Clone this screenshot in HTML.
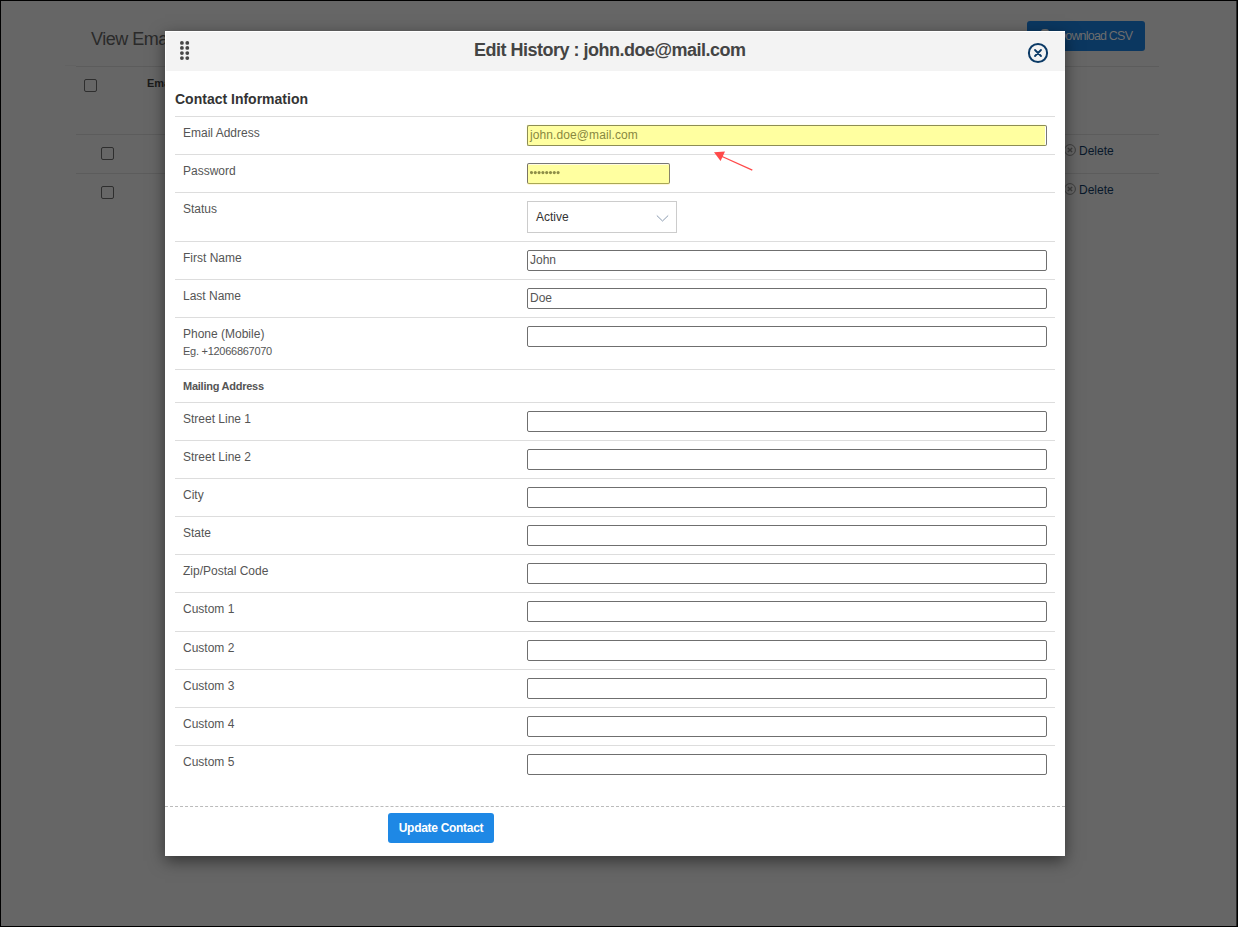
<!DOCTYPE html>
<html><head><meta charset="utf-8">
<style>
*{margin:0;padding:0;box-sizing:border-box}
html,body{width:1238px;height:927px;overflow:hidden}
body{position:relative;background:#666;font-family:"Liberation Sans",sans-serif;border:1px solid #000}
.a{position:absolute;white-space:nowrap}
.ptitle{left:90px;top:27px;font-size:18px;color:#2a2a2a;line-height:22px;letter-spacing:-0.5px}
.hline{position:absolute;height:1px;background:#5c5c5c}
.cb{position:absolute;width:13px;height:13px;border:1px solid #2e2e2e;border-radius:2px}
.pbtn{left:1026px;top:20px;width:118px;height:30px;background:#0b3760;border-radius:3px}
.pbtnt{left:1056px;top:27px;font-size:12.5px;color:#6e6e6e;line-height:16px;letter-spacing:-0.8px}
.del{font-size:12px;color:#08182a;line-height:16px}
.delic{position:absolute;width:11px;height:11px;border:1px solid #3a3a3a;border-radius:50%}
.modal{position:absolute;left:164px;top:30px;width:900px;height:825px;background:#fff;box-shadow:0 5px 15px rgba(0,0,0,.5)}
.mhead{position:absolute;left:1px;top:1px;width:899px;height:39px;background:#f3f3f3}
.title{left:309px;top:8px;font-size:18px;font-weight:bold;color:#444;line-height:22px;letter-spacing:-0.5px}
.sec{left:10px;top:60px;font-size:14px;font-weight:bold;color:#333;line-height:16px}
.row{position:absolute;left:10px;width:880px;height:1px;background:#ddd}
.lab{position:absolute;left:18px;font-size:12px;color:#555;line-height:16px;white-space:nowrap}
.hd{font-weight:bold;font-size:11px;letter-spacing:-0.25px}
.eg{font-size:11px;letter-spacing:-0.27px}
.inp{position:absolute;left:362px;width:520px;height:21px;border:1px solid #6f6f6f;border-radius:2px;background:#fff;font-size:12px;color:#555;line-height:19px;padding-left:2px;white-space:nowrap}
.yel{background:#ffffa0;border-color:#8d8d55;color:#888840;letter-spacing:0.1px}
.em{border-right-color:#777;box-shadow:inset -1px 0 0 #fff,-1px -1px 0 #fffff0}
.pw{border-color:#777 #86826a #a9a855 #7a7465;box-shadow:inset 0 1px 0 #fffbe0,0 1px 0 #fff6d8}
.sel{position:absolute;left:362px;width:150px;height:32px;border:1px solid #ccc;background:#fff}
.st{position:absolute;left:8px;top:7px;font-size:12px;color:#333;line-height:16px}
.chev{position:absolute;left:128px;top:12px}
.btn{position:absolute;left:223px;top:782px;width:106px;height:30px;background:#1e88e5;border-radius:3px;color:#fff;font-size:12px;font-weight:bold;line-height:30px;text-align:center;letter-spacing:-0.3px}
.dash{position:absolute;left:0;top:775px;width:900px;height:1px;border-top:1px dashed #bbb}
.grip{position:absolute;left:15px;top:10px}
.close{position:absolute;left:861px;top:10px}

</style></head><body>
<div class="a ptitle">View Email List</div>
<div class="a" style="left:1235px;top:0;width:1px;height:925px;background:#2a2a2a"></div>
<div class="hline" style="left:64px;top:64px;width:11px;background:#626262"></div>
<div class="hline" style="left:75px;top:65px;width:1083px"></div>
<div class="cb" style="left:83px;top:78px"></div>
<div class="a" style="left:146px;top:75px;font-size:11px;font-weight:bold;color:#1a1a1a;line-height:14px">Email</div>
<div class="hline" style="left:75px;top:133px;width:1083px"></div>
<div class="cb" style="left:100px;top:146px"></div>
<div class="hline" style="left:75px;top:172px;width:1083px"></div>
<div class="cb" style="left:100px;top:185px"></div>
<div class="a pbtn"></div>
<div class="a pbtnt">Download CSV</div>
<div class="a" style="left:1040px;top:28px;width:8px;height:6px;background:#6c6c6c;border-radius:3px 3px 0 0"></div>
<svg class="a" style="left:1062px;top:142px" width="14" height="14" viewBox="0 0 14 14"><circle cx="7" cy="7" r="5.4" fill="none" stroke="#3e3e3e" stroke-width="1"/><path d="M4.9 4.9 L9.1 9.1 M9.1 4.9 L4.9 9.1" stroke="#3e3e3e" stroke-width="1.4"/></svg>
<div class="a del" style="left:1078px;top:142px">Delete</div>
<svg class="a" style="left:1062px;top:181px" width="14" height="14" viewBox="0 0 14 14"><circle cx="7" cy="7" r="5.4" fill="none" stroke="#3e3e3e" stroke-width="1"/><path d="M4.9 4.9 L9.1 9.1 M9.1 4.9 L4.9 9.1" stroke="#3e3e3e" stroke-width="1.4"/></svg>
<div class="a del" style="left:1078px;top:181px">Delete</div>

<div class="modal">
  <div class="mhead"></div>
  <svg class="grip" width="12" height="20" viewBox="0 0 12 20"><g fill="#464646"><circle cx="1.9" cy="1.9" r="1.9"/><circle cx="7.3" cy="1.9" r="1.9"/><circle cx="1.9" cy="6.9" r="1.9"/><circle cx="7.3" cy="6.9" r="1.9"/><circle cx="1.9" cy="12.1" r="1.9"/><circle cx="7.3" cy="12.1" r="1.9"/><circle cx="1.9" cy="17.1" r="1.9"/><circle cx="7.3" cy="17.1" r="1.9"/></g></svg>
  <div class="a title">Edit History : john.doe@mail.com</div>
  <svg class="close" width="24" height="24" viewBox="0 0 24 24"><circle cx="12" cy="12" r="9.1" fill="none" stroke="#0b3a66" stroke-width="2"/><path d="M9 9 L15 15 M15 9 L9 15" stroke="#0b3a66" stroke-width="1.8" stroke-linecap="round"/></svg>
  <div class="a sec">Contact Information</div>
<div class="row" style="top:85px"></div>
<div class="lab" style="top:94px">Email Address</div>
<div class="inp yel em" style="top:94px"><span class="it">john.doe@mail.com</span></div>
<div class="row" style="top:123px"></div>
<div class="lab" style="top:132px">Password</div>
<div class="inp yel pw" style="top:132px;width:143px"><svg style="position:absolute;left:2px;top:6.5px" width="32" height="5"><circle cx="1.50" cy="1.6" r="1.55" fill="#8e8e48"/><circle cx="5.30" cy="1.6" r="1.55" fill="#8e8e48"/><circle cx="9.10" cy="1.6" r="1.55" fill="#8e8e48"/><circle cx="12.90" cy="1.6" r="1.55" fill="#8e8e48"/><circle cx="16.70" cy="1.6" r="1.55" fill="#8e8e48"/><circle cx="20.50" cy="1.6" r="1.55" fill="#8e8e48"/><circle cx="24.30" cy="1.6" r="1.55" fill="#8e8e48"/><circle cx="28.10" cy="1.6" r="1.55" fill="#8e8e48"/></svg></div>
<div class="row" style="top:161px"></div>
<div class="lab" style="top:170px">Status</div>
<div class="sel" style="top:170px"><span class="st">Active</span><svg class="chev" width="14" height="9" viewBox="0 0 14 9"><path d="M0.8 1.5 L6.5 7 L12.2 1.5" fill="none" stroke="#8b9bb0" stroke-width="1"/></svg></div>
<div class="row" style="top:210px"></div>
<div class="lab" style="top:219px">First Name</div>
<div class="inp" style="top:219px"><span class="it">John</span></div>
<div class="row" style="top:248px"></div>
<div class="lab" style="top:257px">Last Name</div>
<div class="inp" style="top:257px"><span class="it">Doe</span></div>
<div class="row" style="top:286px"></div>
<div class="lab" style="top:295px">Phone (Mobile)</div>
<div class="lab eg" style="top:312px">Eg. +12066867070</div>
<div class="inp" style="top:295px"><span class="it"></span></div>
<div class="row" style="top:338px"></div>
<div class="lab hd" style="top:347px">Mailing Address</div>
<div class="row" style="top:371px"></div>
<div class="lab" style="top:380px">Street Line 1</div>
<div class="inp" style="top:380px"><span class="it"></span></div>
<div class="row" style="top:409px"></div>
<div class="lab" style="top:418px">Street Line 2</div>
<div class="inp" style="top:418px"><span class="it"></span></div>
<div class="row" style="top:447px"></div>
<div class="lab" style="top:456px">City</div>
<div class="inp" style="top:456px"><span class="it"></span></div>
<div class="row" style="top:485px"></div>
<div class="lab" style="top:494px">State</div>
<div class="inp" style="top:494px"><span class="it"></span></div>
<div class="row" style="top:523px"></div>
<div class="lab" style="top:532px">Zip/Postal Code</div>
<div class="inp" style="top:532px"><span class="it"></span></div>
<div class="row" style="top:561px"></div>
<div class="lab" style="top:570px">Custom 1</div>
<div class="inp" style="top:570px"><span class="it"></span></div>
<div class="row" style="top:600px"></div>
<div class="lab" style="top:609px">Custom 2</div>
<div class="inp" style="top:609px"><span class="it"></span></div>
<div class="row" style="top:638px"></div>
<div class="lab" style="top:647px">Custom 3</div>
<div class="inp" style="top:647px"><span class="it"></span></div>
<div class="row" style="top:676px"></div>
<div class="lab" style="top:685px">Custom 4</div>
<div class="inp" style="top:685px"><span class="it"></span></div>
<div class="row" style="top:714px"></div>
<div class="lab" style="top:723px">Custom 5</div>
<div class="inp" style="top:723px"><span class="it"></span></div>
  <div class="dash"></div>
  <div class="btn">Update Contact</div>
</div>
<svg class="a" style="left:0;top:0" width="1238" height="927"><path d="M751.3 169.2 L720 155" stroke="#ff4a4a" stroke-width="1.3"/><path d="M713 151.2 L724 150.6 L719.6 160 Z" fill="#ff4a4a"/></svg>
</body></html>
